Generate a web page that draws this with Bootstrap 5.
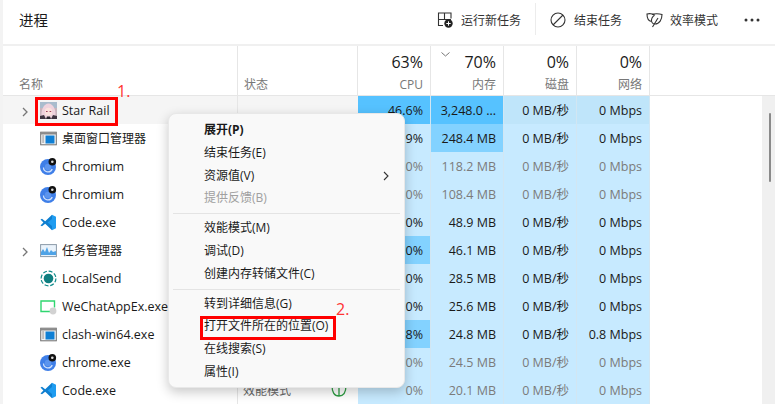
<!doctype html>
<html lang="zh">
<head>
<meta charset="utf-8">
<title>进程</title>
<link href="https://cdn.jsdelivr.net/npm/bootstrap@5.3.0/dist/css/bootstrap.min.css" rel="stylesheet">
<style>
html,body{width:775px;height:404px;overflow:hidden;background:#fff}
body{font-family:"Open Sans","Noto Sans CJK SC",sans-serif;font-size:12.5px;color:#1a1a1a;position:relative}
.cjk{font-family:"Noto Sans CJK SC",sans-serif;font-size:12px;margin-top:-2px}
.shell{padding-left:3px;background:#f3f3f3;height:404px}
.pane{background:#fff;height:404px}
.topbar{height:44px;padding-left:16px;padding-right:15px}
.ptitle{font-family:"Noto Sans CJK SC",sans-serif;font-size:14.5px;color:#1a1a1a;margin-top:-4px}
.tact{font-family:"Noto Sans CJK SC",sans-serif;font-size:12px;color:#333;gap:7px;margin-top:-4px}
.tdiv{width:1px;height:32px;background:#ececec;margin:-6px 14px 0}
.gut{height:2px;background:#f0f0f0}
.grid-row{display:grid;grid-template-columns:235px 120px 73px 73px 73px 73px}
.head{height:51px;border-bottom:1px solid #e6e6e6}
.hc{border-right:1px solid #e6e6e6;padding:0 7px 1px;display:flex;flex-direction:column;justify-content:flex-end;text-align:right;position:relative}
.hn{text-align:left;padding-left:16px}
.hs{text-align:left;padding-left:6px}
.pct{font-size:16px;line-height:22px;color:#1a1a1a}
.lbl{font-size:12px;line-height:18px;color:#777;margin-top:3px}
.sortc{position:absolute;left:10px;top:6px}
.prow{height:28px;grid-auto-rows:28px;line-height:28px}
.cn{padding-left:17px;padding-top:2px;display:flex;align-items:center;background:#fff}
.cst{background:#fff;border-left:1px solid #e6e6e6;padding-left:5px;margin-left:-1px;display:flex;align-items:center;gap:40px;color:#666;font-size:12px;font-family:"Noto Sans CJK SC",sans-serif}
.cv{text-align:right;padding-right:7px;background:#c7eaff;border-right:1px solid #d2e6f2;white-space:nowrap;line-height:30px}
.dim{color:#7b7b7b}
.strong{background:#56c2ff}
.mid{background:#83d2ff}
.hover-row .cn,.hover-row .cst{background:#f5f5f5}
.hover-row .cv{background:#bfe5fa}
.hover-row .cv.strong{background:#56c2ff}
.chev{width:22px;flex:none;color:#777}
.pic{width:17px;height:17px;flex:none;margin:-2px 5px 0 -2px}
.sbar{width:13px;background:#f0f0f0;position:relative;flex:none}
.thumb{position:absolute;left:7px;top:17px;width:2px;height:69px;background:#8a8a8a;border-radius:1px}
.ctx{position:absolute;left:168px;top:113px;width:237px;height:275px;background:#f9f9f9;border-radius:8px;border:1px solid #e8e8e8;box-shadow:0 4px 12px rgba(0,0,0,.22);padding:5px 0 0;font-family:"Open Sans","Noto Sans CJK SC",sans-serif;font-size:12px;color:#1a1a1a;z-index:5}
.mi{height:22.8px;line-height:22.8px;padding-left:35px;white-space:nowrap;position:relative}
.mi.off{color:#a0a0a0}
.msep{height:1px;background:#e4e4e4;margin:3px 4px}
.marr{position:absolute;right:13px;top:6px}
.redbox{position:absolute;border:3px solid #f00;z-index:6}
.rb1{left:35px;top:97px;width:83px;height:29px}
.rb2{left:200px;top:316px;width:136px;height:24px}
.rednum{position:absolute;color:#f33;font-size:16px;line-height:16px;z-index:7}
.n1{left:117px;top:83px}
.n2{left:336px;top:301px}
</style>
</head>
<body>
<svg width="0" height="0" style="position:absolute">
<defs>
<symbol id="i-win" viewBox="0 0 17 17"><rect x=".7" y="2.200" width="15.600" height="12.600" fill="#f4f4f4" stroke="#6f6f6f"/><rect x="1" y="2.500" width="15" height="2" fill="#8a8a8a"/><rect x="5.500" y="5.500" width="9" height="8" fill="#0f7fd4"/><path d="M2.200 6h2M2.200 8h2M2.200 10h2M2.200 12h2" stroke="#888"/></symbol>
<symbol id="i-chr" viewBox="0 0 17 17"><circle cx="8" cy="9" r="8" fill="#3f7fe8"/><path d="M3.500 9.500a4.500 4.500 0 0 0 8.700 1.500" fill="none" stroke="#cfe0fb" stroke-width="1.300"/><circle cx="8" cy="9" r="3.200" fill="#5b94ee"/><circle cx="12.300" cy="3.800" r="3.800" fill="#111"/><circle cx="12.300" cy="3.800" r="1.300" fill="#ddd"/></symbol>
<symbol id="i-vs" viewBox="0 0 17 17"><path d="M12 .8 5.200 7.200 2 4.700.5 5.600 3.400 8.500.5 11.400 2 12.300l3.200-2.500L12 16.200z" fill="#0f7fd0"/><path d="M12 .8 16 2.700v11.600L12 16.200V12L7.600 8.500 12 5z" fill="#1f9cf0"/></symbol>
<symbol id="i-tm" viewBox="0 0 17 17"><rect x=".6" y="2.600" width="15.800" height="12" fill="#eaf3fb" stroke="#8a9aa8"/><path d="M1 13V10l2-3 2 3 2-5 2 6 2-3 2 2 3-1v4z" fill="#4fa3e6"/></symbol>
<symbol id="i-ls" viewBox="0 0 17 17"><circle cx="8.500" cy="8.500" r="7.400" fill="none" stroke="#0f8a8a" stroke-width="1.200" stroke-dasharray="4 1.800"/><circle cx="8.500" cy="8.500" r="4.800" fill="#0f7f80"/></symbol>
<symbol id="i-wc" viewBox="0 0 17 17"><path d="M11 13.500H1V3h13.500v6.500" fill="none" stroke="#2fd66f" stroke-width="1.400"/><circle cx="13" cy="13" r="3.400" fill="#d2d2d2"/></symbol>
<symbol id="i-star" viewBox="0 0 17 17"><rect width="17" height="17" fill="#c9b4bc"/><rect width="17" height="6" fill="#a9bccd"/><path d="M2 17C0 8 4 1.500 8.500 1.500S17 8 15 17z" fill="#efd3dd"/><path d="M5 8c1-3 6-3 7 0v4c-1 2-6 2-7 0z" fill="#fbe3de"/><path d="M6 9.500h1.600M9.600 9.500h1.600" stroke="#a0405f" stroke-width="1.100"/><path d="M0 17v-3l4-1 2 4zM17 17v-3l-4-1-2 4z" fill="#3f3540"/><path d="M7 14.500h3l1 2.500H6z" fill="#2c2830"/></symbol>
<symbol id="i-chev" viewBox="0 0 10 10"><path d="M3 1l4 4-4 4" fill="none" stroke="currentColor" stroke-width="1.300"/></symbol>
</defs>
</svg>

<div class="shell">
<div class="pane d-flex flex-column">
  <div class="topbar d-flex align-items-center justify-content-between">
    <div class="ptitle">进程</div>
    <div class="d-flex align-items-center">
      <div class="tact d-flex align-items-center">
        <svg width="16" height="16" viewBox="0 0 16 16"><path d="M9 1H1.500v12.500H6M1.500 7.500H14M7.500 1v6M9 1h5v5.500" fill="none" stroke="#333" stroke-width="1.100"/><circle cx="11.500" cy="11.500" r="4.200" fill="#222"/><path d="M11.500 9.300v4.400M9.300 11.500h4.400" stroke="#fff"/></svg>
        <span style="margin-left:1px">运行新任务</span>
      </div>
      <div class="tdiv"></div>
      <div class="tact d-flex align-items-center">
        <svg width="16" height="16" viewBox="0 0 16 16"><circle cx="8" cy="8" r="7" fill="none" stroke="#333" stroke-width="1.100"/><path d="M3 13 13 3" stroke="#333" stroke-width="1.100"/></svg>
        <span style="margin-left:1px">结束任务</span>
      </div>
      <div class="tact d-flex align-items-center" style="margin-left:24px">
        <svg width="17" height="16" viewBox="0 0 17 16"><path d="M8.500 3C7 1.500 3 1.300 1 2c0 4 1.500 7 4.500 7.500" fill="none" stroke="#333" stroke-width="1.100"/><path d="M6 2.500C8 1.500 13 1.500 16 2.500c0 5-2.500 9.500-7 9.500-3 0-4.500-3-3-6 .5-1 1-2 2.500-2.800" fill="none" stroke="#333" stroke-width="1.100"/><path d="M6.500 15 12 6" stroke="#333" stroke-width="1.100"/></svg>
        <span>效率模式</span>
      </div>
      <svg class="topdots" style="margin:-4px 0 0 26px" width="16" height="4" viewBox="0 0 16 4"><circle cx="2" cy="2" r="1.500" fill="#333"/><circle cx="8" cy="2" r="1.500" fill="#333"/><circle cx="14" cy="2" r="1.500" fill="#333"/></svg>
    </div>
  </div>
  <div class="gut"></div>

  <div class="grid-row head">
    <div class="hc hn"><span class="lbl">名称</span></div>
    <div class="hc hs"><span class="lbl">状态</span></div>
    <div class="hc"><span class="pct">63%</span><span class="lbl">CPU</span></div>
    <div class="hc"><svg class="sortc" width="9" height="5" viewBox="0 0 9 5"><path d="M.5.500 4.500 4 8.500.500" fill="none" stroke="#777"/></svg><span class="pct">70%</span><span class="lbl">内存</span></div>
    <div class="hc"><span class="pct">0%</span><span class="lbl">磁盘</span></div>
    <div class="hc"><span class="pct">0%</span><span class="lbl">网络</span></div>
  </div>

  <div class="d-flex flex-grow-1 justify-content-between">
    <div class="rowsbox">
      <div class="grid-row prow hover-row"><div class="cn"><span class="chev"><svg width="10" height="10"><use href="#i-chev"/></svg></span><svg class="pic"><use href="#i-star"/></svg>Star Rail</div><div class="cst"></div><div class="cv strong">46.6%</div><div class="cv strong">3,248.0 ...</div><div class="cv">0 MB/秒</div><div class="cv">0 Mbps</div></div>
      <div class="grid-row prow"><div class="cn"><span class="chev"></span><svg class="pic"><use href="#i-win"/></svg><span class="cjk">桌面窗口管理器</span></div><div class="cst"></div><div class="cv">0.9%</div><div class="cv mid">248.4 MB</div><div class="cv">0 MB/秒</div><div class="cv">0 Mbps</div></div>
      <div class="grid-row prow"><div class="cn"><span class="chev"></span><svg class="pic"><use href="#i-chr"/></svg>Chromium</div><div class="cst"></div><div class="cv dim">0%</div><div class="cv dim">118.2 MB</div><div class="cv dim">0 MB/秒</div><div class="cv dim">0 Mbps</div></div>
      <div class="grid-row prow"><div class="cn"><span class="chev"></span><svg class="pic"><use href="#i-chr"/></svg>Chromium</div><div class="cst"></div><div class="cv dim">0%</div><div class="cv dim">108.4 MB</div><div class="cv dim">0 MB/秒</div><div class="cv dim">0 Mbps</div></div>
      <div class="grid-row prow"><div class="cn"><span class="chev"></span><svg class="pic"><use href="#i-vs"/></svg>Code.exe</div><div class="cst"></div><div class="cv">0%</div><div class="cv">48.9 MB</div><div class="cv">0 MB/秒</div><div class="cv">0 Mbps</div></div>
      <div class="grid-row prow"><div class="cn"><span class="chev"><svg width="10" height="10"><use href="#i-chev"/></svg></span><svg class="pic"><use href="#i-tm"/></svg><span class="cjk">任务管理器</span></div><div class="cst"></div><div class="cv mid">1.0%</div><div class="cv">46.1 MB</div><div class="cv">0 MB/秒</div><div class="cv">0 Mbps</div></div>
      <div class="grid-row prow"><div class="cn"><span class="chev"></span><svg class="pic"><use href="#i-ls"/></svg>LocalSend</div><div class="cst"></div><div class="cv">0%</div><div class="cv">28.5 MB</div><div class="cv">0 MB/秒</div><div class="cv">0 Mbps</div></div>
      <div class="grid-row prow"><div class="cn"><span class="chev"></span><svg class="pic"><use href="#i-wc"/></svg>WeChatAppEx.exe</div><div class="cst"></div><div class="cv">0%</div><div class="cv">25.6 MB</div><div class="cv">0 MB/秒</div><div class="cv">0 Mbps</div></div>
      <div class="grid-row prow"><div class="cn"><span class="chev"></span><svg class="pic"><use href="#i-win"/></svg>clash-win64.exe</div><div class="cst"></div><div class="cv mid">0.8%</div><div class="cv">24.8 MB</div><div class="cv">0 MB/秒</div><div class="cv">0.8 Mbps</div></div>
      <div class="grid-row prow"><div class="cn"><span class="chev"></span><svg class="pic"><use href="#i-chr"/></svg>chrome.exe</div><div class="cst"></div><div class="cv dim">0%</div><div class="cv dim">24.5 MB</div><div class="cv dim">0 MB/秒</div><div class="cv dim">0 Mbps</div></div>
      <div class="grid-row prow"><div class="cn"><span class="chev"></span><svg class="pic"><use href="#i-vs"/></svg>Code.exe</div><div class="cst"><span>效能模式</span><svg width="16" height="16" viewBox="0 0 16 16"><path d="M8 14C3 14 1 10 1 3M8 14c5 0 7-4 7-11M8 14V6" fill="none" stroke="#2f9e44" stroke-width="1.300"/></svg></div><div class="cv dim">0%</div><div class="cv dim">20.1 MB</div><div class="cv dim">0 MB/秒</div><div class="cv dim">0 Mbps</div></div>
    </div>
    <div class="sbar"><div class="thumb"></div></div>
  </div>
</div>
</div>

<div class="ctx">
  <div class="mi"><b>展开(P)</b></div>
  <div class="mi">结束任务(E)</div>
  <div class="mi">资源值(V)<svg class="marr" width="10" height="10" viewBox="0 0 10 10"><path d="M3 1l4 4-4 4" fill="none" stroke="#333" stroke-width="1.100"/></svg></div>
  <div class="mi off">提供反馈(B)</div>
  <div class="msep"></div>
  <div class="mi">效能模式(M)</div>
  <div class="mi">调试(D)</div>
  <div class="mi">创建内存转储文件(C)</div>
  <div class="msep"></div>
  <div class="mi">转到详细信息(G)</div>
  <div class="mi">打开文件所在的位置(O)</div>
  <div class="mi">在线搜索(S)</div>
  <div class="mi">属性(I)</div>
</div>
<div class="redbox rb1"></div>
<div class="rednum n1">1.</div>
<div class="redbox rb2"></div>
<div class="rednum n2">2.</div>
</body>
</html>
